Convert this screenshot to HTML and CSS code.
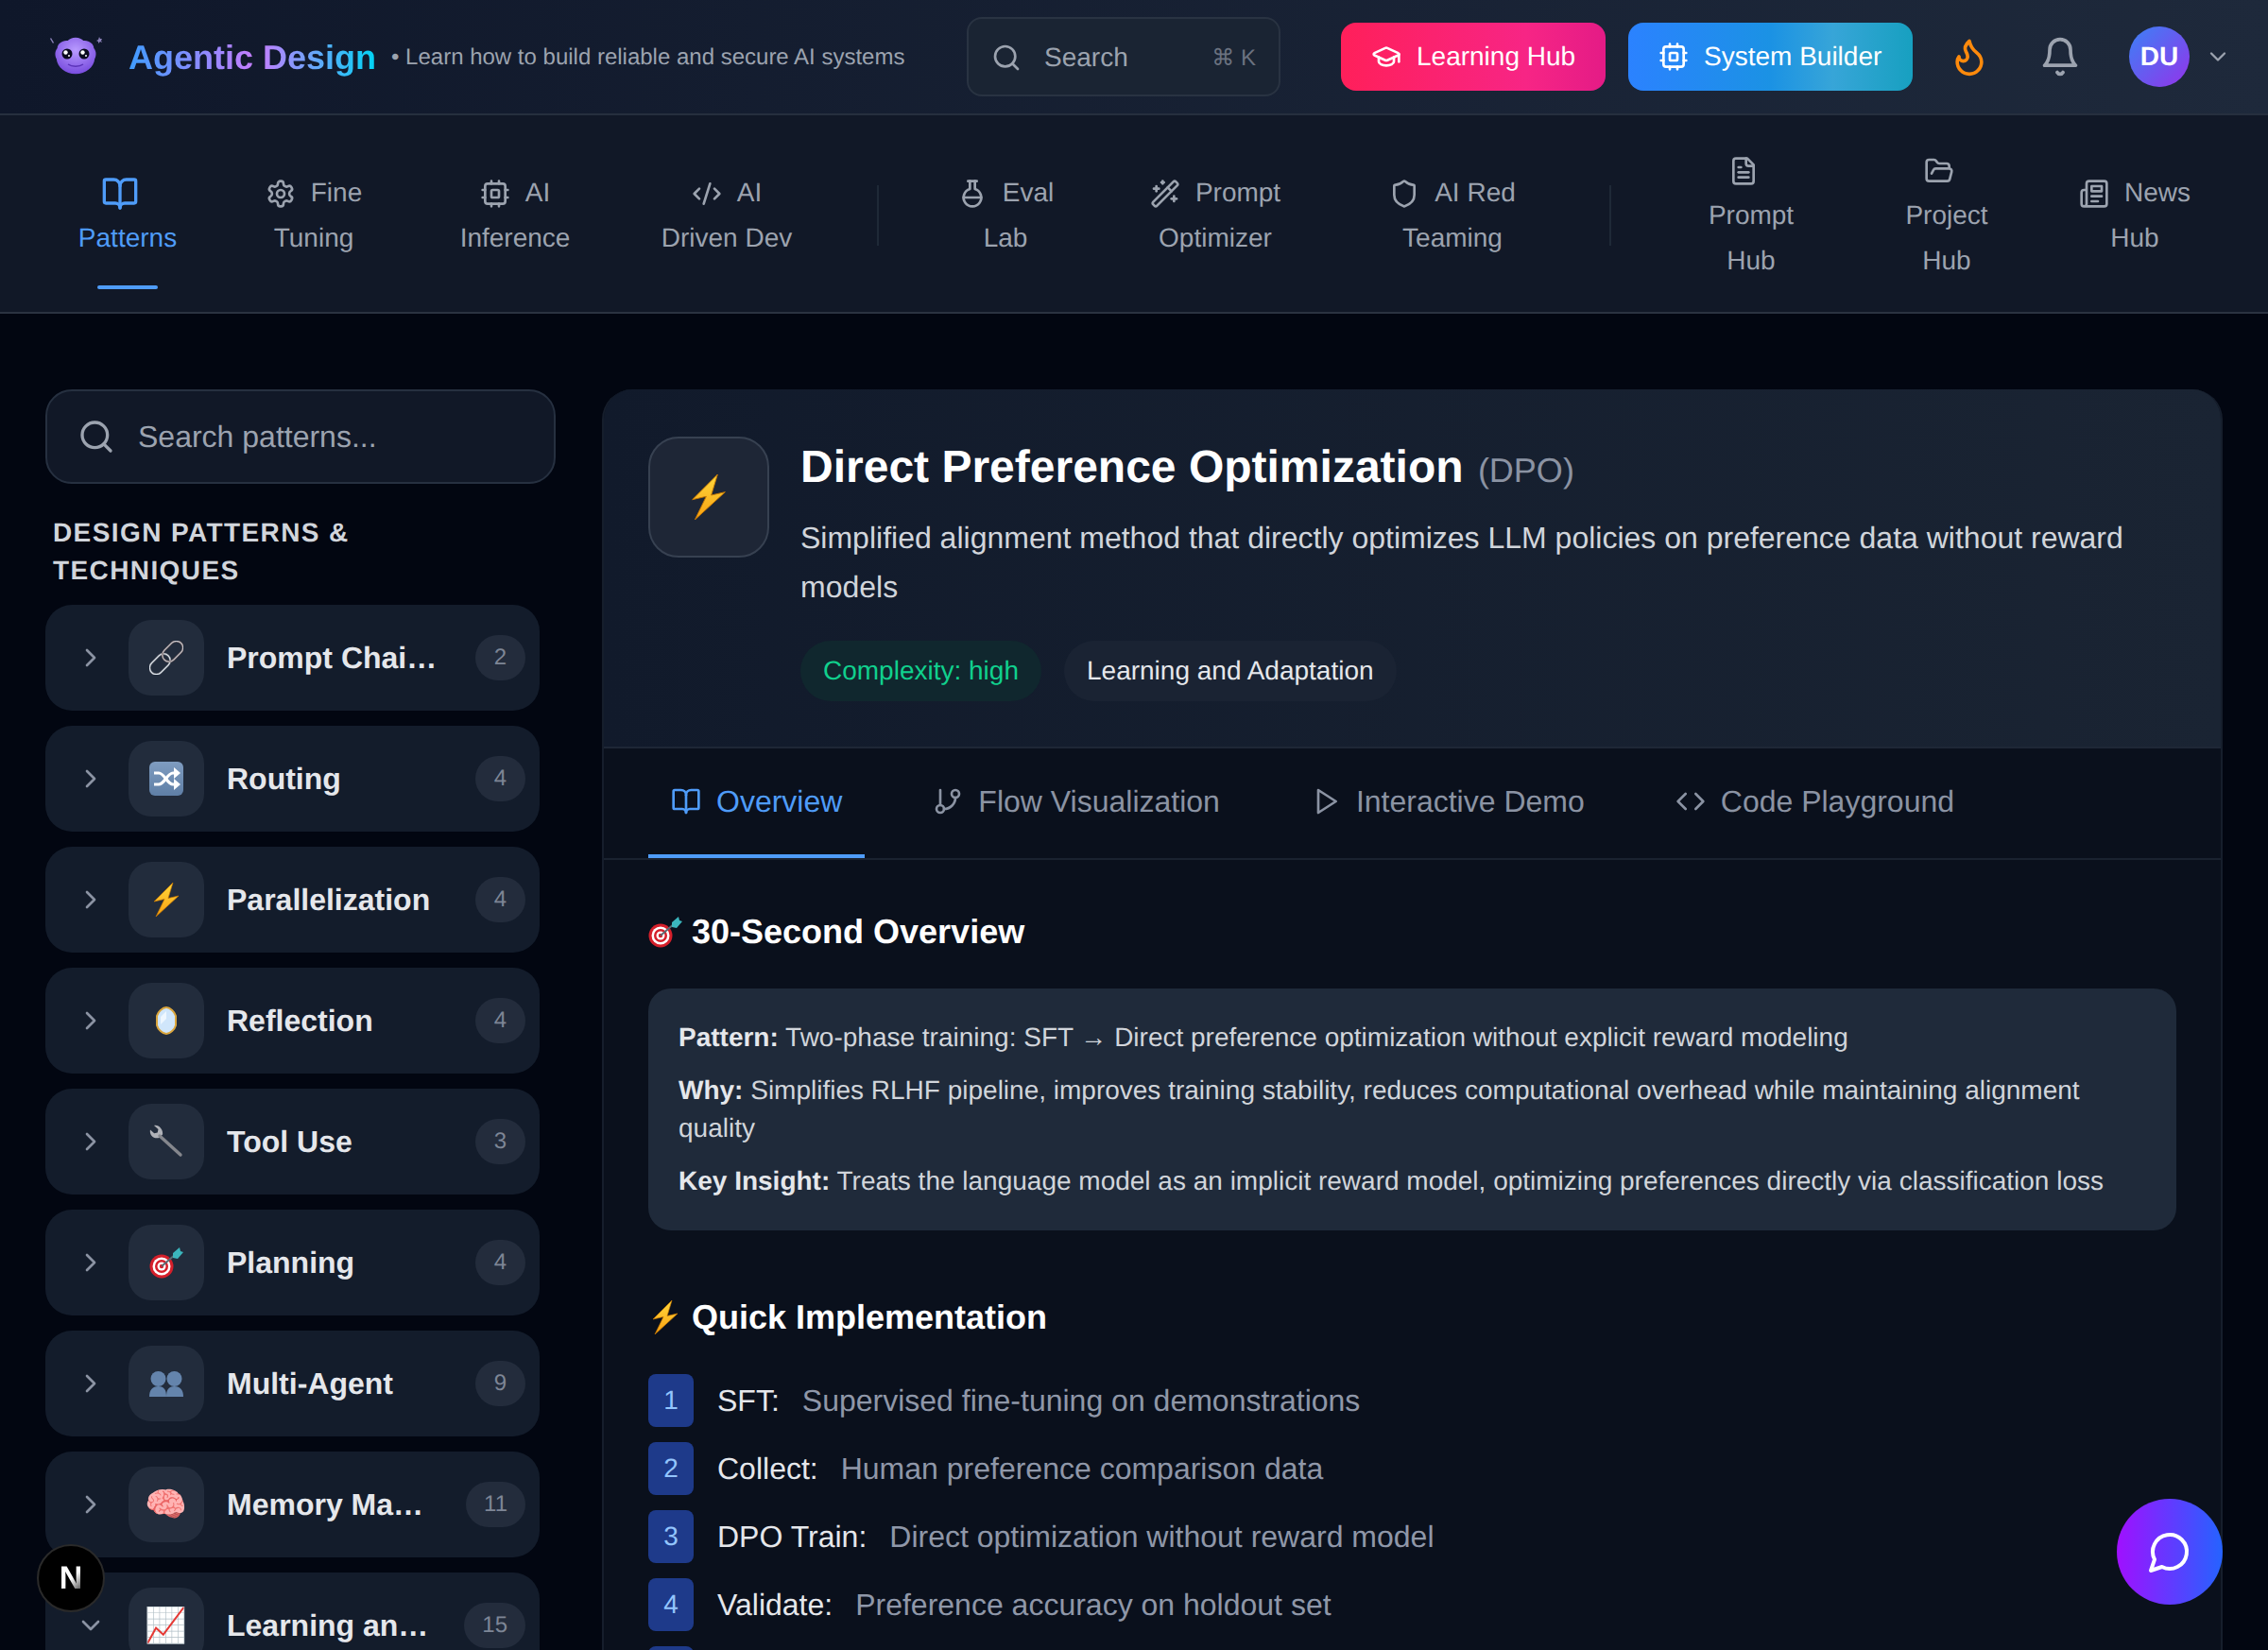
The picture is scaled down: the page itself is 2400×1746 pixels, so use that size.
FILE: index.html
```html
<!DOCTYPE html>
<html lang="en">
<head>
<meta charset="utf-8">
<title>Direct Preference Optimization - Agentic Design</title>
<link rel="stylesheet" href="styles.css">
</head>
<body>

<svg class="sprite" xmlns="http://www.w3.org/2000/svg">
 <defs>
  <linearGradient id="boltfill" x1="0" y1="0" x2="0" y2="1"><stop offset="0" stop-color="#ffd83d"/><stop offset="1" stop-color="#f9a010"/></linearGradient>
  <linearGradient id="tilefill" x1="0" y1="0" x2="0" y2="1"><stop offset="0" stop-color="#7f9cc0"/><stop offset="1" stop-color="#5f7fa6"/></linearGradient>
  <radialGradient id="blobfill" cx=".5" cy=".35" r=".7"><stop offset="0" stop-color="#b99bff"/><stop offset="1" stop-color="#7447dc"/></radialGradient>
 </defs>
 <symbol id="i-book" viewBox="0 0 24 24"><path d="M12 7v14"/><path d="M3 18a1 1 0 0 1-1-1V4a1 1 0 0 1 1-1h5a4 4 0 0 1 4 4 4 4 0 0 1 4-4h5a1 1 0 0 1 1 1v13a1 1 0 0 1-1 1h-6a3 3 0 0 0-3 3 3 3 0 0 0-3-3z"/></symbol>
 <symbol id="i-gear" viewBox="0 0 24 24"><path d="M12.22 2h-.44a2 2 0 0 0-2 2v.18a2 2 0 0 1-1 1.73l-.43.25a2 2 0 0 1-2 0l-.15-.08a2 2 0 0 0-2.73.73l-.22.38a2 2 0 0 0 .73 2.73l.15.1a2 2 0 0 1 1 1.72v.51a2 2 0 0 1-1 1.74l-.15.09a2 2 0 0 0-.73 2.73l.22.38a2 2 0 0 0 2.73.73l.15-.08a2 2 0 0 1 2 0l.43.25a2 2 0 0 1 1 1.73V20a2 2 0 0 0 2 2h.44a2 2 0 0 0 2-2v-.18a2 2 0 0 1 1-1.73l.43-.25a2 2 0 0 1 2 0l.15.08a2 2 0 0 0 2.73-.73l.22-.39a2 2 0 0 0-.73-2.73l-.15-.08a2 2 0 0 1-1-1.74v-.5a2 2 0 0 1 1-1.74l.15-.09a2 2 0 0 0 .73-2.73l-.22-.38a2 2 0 0 0-2.73-.73l-.15.08a2 2 0 0 1-2 0l-.43-.25a2 2 0 0 1-1-1.73V4a2 2 0 0 0-2-2z"/><circle cx="12" cy="12" r="3"/></symbol>
 <symbol id="i-cpu" viewBox="0 0 24 24"><rect x="4" y="4" width="16" height="16" rx="2"/><rect x="9" y="9" width="6" height="6" rx="1"/><path d="M15 2v2M15 20v2M2 15h2M2 9h2M20 15h2M20 9h2M9 2v2M9 20v2"/></symbol>
 <symbol id="i-codexml" viewBox="0 0 24 24"><path d="m18 16 4-4-4-4"/><path d="m6 8-4 4 4 4"/><path d="m14.5 4-5 16"/></symbol>
 <symbol id="i-flask" viewBox="0 0 24 24"><path d="M10 2v6.292a7 7 0 1 0 4 0V2"/><path d="M5 15h14"/><path d="M8.5 2h7"/></symbol>
 <symbol id="i-wand" viewBox="0 0 24 24"><path d="m21.64 3.64-1.28-1.28a1.21 1.21 0 0 0-1.72 0L2.36 18.64a1.21 1.21 0 0 0 0 1.72l1.28 1.28a1.2 1.2 0 0 0 1.72 0L21.64 5.36a1.2 1.2 0 0 0 0-1.72"/><path d="m14 7 3 3"/><path d="M5 6v4"/><path d="M19 14v4"/><path d="M10 2v2"/><path d="M7 8H3"/><path d="M21 16h-4"/><path d="M11 3H9"/></symbol>
 <symbol id="i-shield" viewBox="0 0 24 24"><path d="M20 13c0 5-3.5 7.5-7.66 8.95a1 1 0 0 1-.67-.01C7.5 20.5 4 18 4 13V6a1 1 0 0 1 1-1c2 0 4.5-1.2 6.24-2.72a1.17 1.17 0 0 1 1.52 0C14.51 3.81 17 5 19 5a1 1 0 0 1 1 1z"/></symbol>
 <symbol id="i-file" viewBox="0 0 24 24"><path d="M15 2H6a2 2 0 0 0-2 2v16a2 2 0 0 0 2 2h12a2 2 0 0 0 2-2V7Z"/><path d="M14 2v4a2 2 0 0 0 2 2h4"/><path d="M10 9H8"/><path d="M16 13H8"/><path d="M16 17H8"/></symbol>
 <symbol id="i-folder" viewBox="0 0 24 24"><path d="m6 14 1.5-2.9A2 2 0 0 1 9.24 10H20a2 2 0 0 1 1.94 2.5l-1.54 6a2 2 0 0 1-1.95 1.5H4a2 2 0 0 1-2-2V5a2 2 0 0 1 2-2h3.9a2 2 0 0 1 1.69.9l.81 1.2a2 2 0 0 0 1.67.9H18a2 2 0 0 1 2 2v2"/></symbol>
 <symbol id="i-news" viewBox="0 0 24 24"><path d="M4 22h16a2 2 0 0 0 2-2V4a2 2 0 0 0-2-2H8a2 2 0 0 0-2 2v16a2 2 0 0 1-2 2Zm0 0a2 2 0 0 1-2-2v-9c0-1.1.9-2 2-2h2"/><path d="M18 14h-8"/><path d="M15 18h-5"/><path d="M10 6h8v4h-8V6Z"/></symbol>
 <symbol id="i-search" viewBox="0 0 24 24"><circle cx="11" cy="11" r="8"/><path d="m21 21-4.3-4.3"/></symbol>
 <symbol id="i-cap" viewBox="0 0 24 24"><path d="M21.42 10.922a1 1 0 0 0-.019-1.838L12.83 5.18a2 2 0 0 0-1.66 0L2.6 9.08a1 1 0 0 0 0 1.832l8.57 3.908a2 2 0 0 0 1.66 0z"/><path d="M22 10v6"/><path d="M6 12.5V16a6 3 0 0 0 12 0v-3.5"/></symbol>
 <symbol id="i-flame" viewBox="0 0 24 24"><path d="M8.5 14.5A2.5 2.5 0 0 0 11 12c0-1.38-.5-2-1-3-1.072-2.143-.224-4.054 2-6 .5 2.5 2 4.9 4 6.5 2 1.6 3 3.5 3 5.5a7 7 0 1 1-14 0c0-1.153.433-2.294 1-3a2.5 2.5 0 0 0 2.5 2.5z"/></symbol>
 <symbol id="i-bell" viewBox="0 0 24 24"><path d="M6 8a6 6 0 0 1 12 0c0 7 3 9 3 9H3s3-2 3-9"/><path d="M10.3 21a1.94 1.94 0 0 0 3.4 0"/></symbol>
 <symbol id="i-down" viewBox="0 0 24 24"><path d="m6 9 6 6 6-6"/></symbol>
 <symbol id="i-right" viewBox="0 0 24 24"><path d="m9 18 6-6-6-6"/></symbol>
 <symbol id="i-branch" viewBox="0 0 24 24"><path d="M6 3v12"/><circle cx="18" cy="6" r="3"/><circle cx="6" cy="18" r="3"/><path d="M18 9a9 9 0 0 1-9 9"/></symbol>
 <symbol id="i-play" viewBox="0 0 24 24"><path d="M6 3l14 9-14 9z"/></symbol>
 <symbol id="i-code" viewBox="0 0 24 24"><path d="m16 18 6-6-6-6"/><path d="m8 6-6 6 6 6"/></symbol>
 <symbol id="i-chat" viewBox="0 0 24 24"><path d="M7.9 20A9 9 0 1 0 4 16.1L2 22Z"/></symbol>

 <symbol id="e-bolt" viewBox="0 0 36 36"><path d="M25 0 5 20l11-2.500L7 36l24-22-11 2.500z" fill="url(#boltfill)" stroke="#c77700" stroke-width=".7"/></symbol>
 <symbol id="e-link" viewBox="0 0 36 36"><g fill="none" transform="rotate(-45 18 18)"><rect x="-4" y="11" width="25" height="14" rx="7" stroke="#6f7279" stroke-width="2.200"/><rect x="-4" y="11" width="25" height="14" rx="7" stroke="#e6edf5" stroke-width="1"/><rect x="15" y="11" width="25" height="14" rx="7" stroke="#6b5a5a" stroke-width="2.200"/><rect x="15" y="11" width="25" height="14" rx="7" stroke="#c9cbd2" stroke-width="1"/></g></symbol>
 <symbol id="e-shuffle" viewBox="0 0 36 36"><rect x="0" y="0" width="36" height="36" rx="6" fill="url(#tilefill)"/><g fill="none" stroke="#fff" stroke-width="3.200"><path d="M5 12h5c6 0 9 12 15 12h3"/><path d="M5 24h5c6 0 9-12 15-12h3"/></g><path d="M26 6l7 6-7 6zM26 18l7 6-7 6z" fill="#fff"/></symbol>
 <symbol id="e-mirror" viewBox="0 0 36 36"><path d="M18 4c4 0 9 5 10 9v10c-1 4-6 9-10 9s-9-5-10-9V13c1-4 6-9 10-9z" fill="#d0e6fb" stroke="#dba63d" stroke-width="2"/><path d="M12 14l6-6v8l-6 6z" fill="#eef7ff"/></symbol>
 <symbol id="e-wrench" viewBox="0 0 36 36"><path d="M5 1l4.500 4-.8 3.500-3.500.8L1 5.500C0 10 3 15.500 10.500 14L14 10.500C15 5.500 10-.5 5 1z" fill="#b0b2b8"/><path d="M11 12l22 20" stroke="#85878d" stroke-width="3.400" stroke-linecap="round"/></symbol>
 <symbol id="e-target" viewBox="0 0 36 36"><circle cx="13" cy="22" r="12.500" fill="#d51f2a"/><circle cx="13" cy="22" r="9.500" fill="#fff"/><circle cx="13" cy="22" r="7" fill="#d51f2a"/><circle cx="13" cy="22" r="4.500" fill="#fff"/><circle cx="13" cy="22" r="2.200" fill="#d51f2a"/><path d="M13 22 28 9" stroke="#5b6b73" stroke-width="2"/><path d="M25 8l7-6 1 4 3 1-6 7-5-1z" fill="#3bb6bd"/></symbol>
 <symbol id="e-people" viewBox="0 0 36 36"><g fill="#6484ac"><circle cx="9.500" cy="13" r="8"/><path d="M0 32c0-7 3-11 9.500-11S18 25 18 32z"/><circle cx="26.500" cy="13" r="8"/><path d="M18 32c0-7 2-11 8.500-11S36 25 36 32z"/></g></symbol>
</svg>

<header class="topbar">
 <div class="brand">
  <svg class="logo" viewBox="0 0 64 64">
   <path transform="translate(32 31) scale(.92 .8) translate(-32 -30)" d="M32 6c4 0 7 2 9 4 6-1 12 4 12 10 3 4 3 10 1 14-1 11-10 20-22 20S11 45 10 34c-2-4-2-10 1-14 0-6 6-11 12-10 2-2 5-4 9-4z" fill="url(#blobfill)"/>
   <circle cx="23" cy="29" r="5.500" fill="#0a0a1e"/><circle cx="41" cy="29" r="5.500" fill="#0a0a1e"/>
   <circle cx="21.500" cy="27.500" r="2.200" fill="#fff"/><circle cx="39.500" cy="27.500" r="2.200" fill="#fff"/>
   <circle cx="25" cy="31" r="1" fill="#fff"/><circle cx="43" cy="31" r="1" fill="#fff"/>
   <path d="M24 40c4 3 12 3 16 0" fill="none" stroke="#5a32b8" stroke-width="1.500"/>
   <path d="M6 12l3 5-1 1-3-5zM57 11l1 2 2 0-1 2 1 2-2-1-2 2 0-2-2-1 2-1z" fill="#8a80b8"/>
  </svg>
  <span class="brand-name">Agentic Design</span>
  <span class="brand-tag">&bull; Learn how to build reliable and secure AI systems</span>
 </div>
 <div class="top-actions">
  <div class="quick-search">
   <svg class="ico ico-32"><use href="#i-search"/></svg>
   <span class="quick-label">Search</span>
   <span class="quick-key">&#8984; K</span>
  </div>
  <a class="btn btn-pink"><svg class="ico ico-32"><use href="#i-cap"/></svg>Learning Hub</a>
  <a class="btn btn-blue"><svg class="ico ico-32"><use href="#i-cpu"/></svg>System Builder</a>
  <span class="icon-btn flame"><svg class="ico ico-44"><use href="#i-flame"/></svg></span>
  <span class="icon-btn"><svg class="ico ico-44"><use href="#i-bell"/></svg></span>
  <span class="avatar">DU</span>
  <svg class="ico ico-28 caret"><use href="#i-down"/></svg>
 </div>
</header>

<nav class="mainnav">
 <a class="nav-item active"><svg class="ico ico-40"><use href="#i-book"/></svg><br>Patterns</a>
 <a class="nav-item"><svg class="ico ico-32"><use href="#i-gear"/></svg>Fine<br>Tuning</a>
 <a class="nav-item"><svg class="ico ico-32"><use href="#i-cpu"/></svg>AI<br>Inference</a>
 <a class="nav-item"><svg class="ico ico-32"><use href="#i-codexml"/></svg>AI<br>Driven Dev</a>
 <span class="nav-sep"></span>
 <a class="nav-item"><svg class="ico ico-32"><use href="#i-flask"/></svg>Eval<br>Lab</a>
 <a class="nav-item"><svg class="ico ico-32"><use href="#i-wand"/></svg>Prompt<br>Optimizer</a>
 <a class="nav-item"><svg class="ico ico-32"><use href="#i-shield"/></svg>AI Red<br>Teaming</a>
 <span class="nav-sep"></span>
 <a class="nav-item"><svg class="ico ico-32"><use href="#i-file"/></svg><br>Prompt<br>Hub</a>
 <a class="nav-item"><svg class="ico ico-32"><use href="#i-folder"/></svg><br>Project<br>Hub</a>
 <a class="nav-item"><svg class="ico ico-32"><use href="#i-news"/></svg>News<br>Hub</a>
</nav>

<main class="page">
 <aside class="sidebar">
  <div class="side-search">
   <svg class="ico ico-40"><use href="#i-search"/></svg>
   <span>Search patterns...</span>
  </div>
  <h2 class="side-title">Design Patterns &amp; Techniques</h2>
  <ul class="cat-list">
   <li class="cat"><svg class="ico ico-32 cat-arrow"><use href="#i-right"/></svg><span class="cat-icon"><svg class="emoji"><use href="#e-link"/></svg></span><span class="cat-name">Prompt Chaining</span><span class="cat-count">2</span></li>
   <li class="cat"><svg class="ico ico-32 cat-arrow"><use href="#i-right"/></svg><span class="cat-icon"><svg class="emoji"><use href="#e-shuffle"/></svg></span><span class="cat-name">Routing</span><span class="cat-count">4</span></li>
   <li class="cat"><svg class="ico ico-32 cat-arrow"><use href="#i-right"/></svg><span class="cat-icon"><svg class="emoji"><use href="#e-bolt"/></svg></span><span class="cat-name">Parallelization</span><span class="cat-count">4</span></li>
   <li class="cat"><svg class="ico ico-32 cat-arrow"><use href="#i-right"/></svg><span class="cat-icon"><svg class="emoji"><use href="#e-mirror"/></svg></span><span class="cat-name">Reflection</span><span class="cat-count">4</span></li>
   <li class="cat"><svg class="ico ico-32 cat-arrow"><use href="#i-right"/></svg><span class="cat-icon"><svg class="emoji"><use href="#e-wrench"/></svg></span><span class="cat-name">Tool Use</span><span class="cat-count">3</span></li>
   <li class="cat"><svg class="ico ico-32 cat-arrow"><use href="#i-right"/></svg><span class="cat-icon"><svg class="emoji"><use href="#e-target"/></svg></span><span class="cat-name">Planning</span><span class="cat-count">4</span></li>
   <li class="cat"><svg class="ico ico-32 cat-arrow"><use href="#i-right"/></svg><span class="cat-icon"><svg class="emoji"><use href="#e-people"/></svg></span><span class="cat-name">Multi-Agent</span><span class="cat-count">9</span></li>
   <li class="cat"><svg class="ico ico-32 cat-arrow"><use href="#i-right"/></svg><span class="cat-icon">&#129504;</span><span class="cat-name">Memory Management</span><span class="cat-count">11</span></li>
   <li class="cat"><svg class="ico ico-32 cat-arrow"><use href="#i-down"/></svg><span class="cat-icon">&#128200;</span><span class="cat-name">Learning and Adaptation</span><span class="cat-count">15</span></li>
  </ul>
 </aside>

 <section class="detail">
  <div class="hero">
   <div class="hero-icon"><svg class="emoji-big"><use href="#e-bolt"/></svg></div>
   <div class="hero-text">
    <h1 class="hero-title">Direct Preference Optimization <span class="hero-abbr">(DPO)</span></h1>
    <p class="hero-desc">Simplified alignment method that directly optimizes LLM policies on preference data without reward models</p>
    <div class="tags">
     <span class="tag tag-green">Complexity: high</span>
     <span class="tag">Learning and Adaptation</span>
    </div>
   </div>
  </div>

  <div class="tabs">
   <a class="tab active"><svg class="ico ico-32"><use href="#i-book"/></svg>Overview</a>
   <a class="tab"><svg class="ico ico-32"><use href="#i-branch"/></svg>Flow Visualization</a>
   <a class="tab"><svg class="ico ico-32"><use href="#i-play"/></svg>Interactive Demo</a>
   <a class="tab"><svg class="ico ico-32"><use href="#i-code"/></svg>Code Playground</a>
  </div>

  <div class="tab-body">
   <h3 class="sec-title"><svg class="emoji"><use href="#e-target"/></svg>30-Second Overview</h3>
   <div class="summary">
    <p><b>Pattern:</b> Two-phase training: SFT &rarr; Direct preference optimization without explicit reward modeling</p>
    <p><b>Why:</b> Simplifies RLHF pipeline, improves training stability, reduces computational overhead while maintaining alignment quality</p>
    <p><b>Key Insight:</b> Treats the language model as an implicit reward model, optimizing preferences directly via classification loss</p>
   </div>
   <h3 class="sec-title sec-second"><svg class="emoji"><use href="#e-bolt"/></svg>Quick Implementation</h3>
   <ol class="steps">
    <li><span class="step-no">1</span><span class="step-label">SFT:</span><span class="step-text">Supervised fine-tuning on demonstrations</span></li>
    <li><span class="step-no">2</span><span class="step-label">Collect:</span><span class="step-text">Human preference comparison data</span></li>
    <li><span class="step-no">3</span><span class="step-label">DPO Train:</span><span class="step-text">Direct optimization without reward model</span></li>
    <li><span class="step-no">4</span><span class="step-label">Validate:</span><span class="step-text">Preference accuracy on holdout set</span></li>
    <li><span class="step-no">5</span><span class="step-label">Deploy:</span><span class="step-text">Release the aligned model</span></li>
   </ol>
  </div>
 </section>
</main>

<a class="dev-badge"><span>N</span></a>
<a class="chat-fab"><svg class="ico ico-48"><use href="#i-chat"/></svg></a>

</body>
</html>
```
FILE: styles.css
```css
* {
 box-sizing: border-box;
}
html, body {
 height: 100%;
}
body {
 margin: 0;
 height: 1746px;
 overflow: hidden;
 background: #020611;
 color: #e5e7eb;
 font-family: "Liberation Sans", Arial, sans-serif;
 text-rendering: geometricPrecision;
}
h1, h2, h3, p, ul, ol {
 margin: 0;
 padding: 0;
}
ul, ol {
 list-style: none;
}
.sprite {
 position: absolute;
 width: 0;
 height: 0;
}

/* icons */
.ico {
 display: inline-block;
 flex: none;
 fill: none;
 stroke: currentColor;
 stroke-width: 2;
 stroke-linecap: round;
 stroke-linejoin: round;
 vertical-align: middle;
}
.ico-28 { width: 28px; height: 28px; }
.ico-32 { width: 32px; height: 32px; }
.ico-40 { width: 40px; height: 40px; }
.ico-44 { width: 44px; height: 44px; }
.ico-48 { width: 48px; height: 48px; }
.emoji { width: 36px; height: 36px; display: block; }
.emoji-big { width: 48px; height: 48px; display: block; }

/* top bar */
.topbar {
 display: flex;
 align-items: center;
 justify-content: space-between;
 height: 122px;
 padding: 0 39px 0 48px;
 background: linear-gradient(90deg, #0f172a, #1e293b);
 border-bottom: 2px solid #262f3e;
}
.brand {
 display: flex;
 align-items: center;
}
.logo {
 width: 64px;
 height: 64px;
 margin-right: 24px;
}
.brand-name {
 padding-top: 2px;
 font-size: 36px;
 font-weight: 700;
 background: linear-gradient(90deg, #3f9cff, #c77dff 52%, #00d4f5);
 -webkit-background-clip: text;
 background-clip: text;
 color: transparent;
}
.brand-tag {
 margin-left: 16px;
 padding-top: 2px;
 font-size: 24px;
 color: #9ca3af;
}
.top-actions {
 display: flex;
 align-items: center;
}
.quick-search {
 display: flex;
 align-items: center;
 width: 332px;
 height: 84px;
 padding: 2px 24px 0 24px;
 margin-right: 64px;
 background: #1a2433;
 border: 2px solid #293342;
 border-radius: 16px;
 color: #9ca3af;
}
.quick-label {
 margin-left: 24px;
 font-size: 28px;
}
.quick-key {
 margin-left: auto;
 font-size: 24px;
 color: #6b7280;
}
.btn {
 display: flex;
 align-items: center;
 gap: 16px;
 height: 72px;
 padding: 0 32px;
 border-radius: 16px;
 color: #fff;
 font-size: 28px;
 white-space: nowrap;
}
.btn-pink {
 width: 280px;
 margin-right: 24px;
 background: linear-gradient(90deg, #ff1f5a, #f72585 70%, #e41b86);
}
.btn-blue {
 width: 301px;
 margin-right: 28px;
 background: linear-gradient(90deg, #2b82ff, #1b92e4 50%, #37a5d8 72%, #17a0c0);
}
.icon-btn {
 display: flex;
 align-items: center;
 justify-content: center;
 width: 64px;
 height: 64px;
 margin-right: 32px;
 color: #9ca3af;
}
.flame {
 color: #ff8a0c;
}
.avatar {
 display: flex;
 align-items: center;
 justify-content: center;
 width: 64px;
 height: 64px;
 margin-left: 9px;
 border-radius: 50%;
 background: linear-gradient(135deg, #3b82f6, #9333ea);
 color: #fff;
 font-size: 28px;
 font-weight: 700;
}
.caret {
 margin-left: 16px;
 color: #9ca3af;
}

/* main navigation */
.mainnav {
 display: grid;
 grid-template-columns: 198px 196px 230px 218px 102px 168px 276px 226px 108px 190px 224px 174px;
 align-items: center;
 height: 210px;
 padding: 4px 0 0 36px;
 background: #111827;
 border-bottom: 2px solid #2b3341;
}
.nav-item {
 position: relative;
 text-align: center;
 font-size: 28px;
 line-height: 48px;
 color: #9ca3af;
}
.nav-item .ico {
 margin-right: 16px;
 position: relative;
 top: -1px;
}
.nav-item.active {
 color: #4f9cf9;
}
.nav-item.active::after {
 content: "";
 position: absolute;
 left: 50%;
 bottom: -30px;
 width: 64px;
 height: 4px;
 margin-left: -32px;
 border-radius: 2px;
 background: #4f9cf9;
}
.nav-sep {
 justify-self: center;
 width: 2px;
 height: 64px;
 background: #1f2937;
}

/* page */
.page {
 display: flex;
 gap: 49px;
 padding: 80px 48px 0;
}
.sidebar {
 flex: none;
 width: 540px;
}
.side-search {
 display: flex;
 align-items: center;
 gap: 24px;
 height: 100px;
 padding: 0 32px;
 background: #111827;
 border: 2px solid #263040;
 border-radius: 28px;
 color: #9ca3af;
 font-size: 32px;
}
.side-title {
 margin: 32px 0 16px;
 padding: 0 60px 0 8px;
 font-size: 28px;
 line-height: 40px;
 font-weight: 700;
 letter-spacing: 1.4px;
 text-transform: uppercase;
 color: #d1d5db;
}
.cat-list {
 display: flex;
 flex-direction: column;
 gap: 16px;
 width: 523px;
}
.cat {
 display: flex;
 align-items: center;
 height: 112px;
 padding: 0 15px 0 32px;
 background: #131c2b;
 border-radius: 28px;
}
.cat-arrow {
 margin-right: 24px;
 color: #8b93a3;
}
.cat-icon {
 display: flex;
 align-items: center;
 justify-content: center;
 flex: none;
 width: 80px;
 height: 80px;
 margin-right: 24px;
 background: #222c3c;
 border-radius: 24px;
 font-size: 36px;
}
.cat-name {
 flex: 1;
 min-width: 0;
 overflow: hidden;
 white-space: nowrap;
 text-overflow: ellipsis;
 font-size: 32px;
 font-weight: 700;
 color: #e5e7eb;
}
.cat-count {
 flex: none;
 min-width: 53px;
 height: 48px;
 margin-left: 26px;
 padding: 0 19px;
 background: #232c3c;
 border-radius: 24px;
 text-align: center;
 font-size: 24px;
 line-height: 48px;
 color: #7e8696;
}

/* detail panel */
.detail {
 flex: 1;
 min-width: 0;
 height: 1400px;
 background: #0a101c;
 border: 2px solid #161e2c;
 border-top: 0;
 border-radius: 32px 32px 0 0;
 overflow: hidden;
}
.hero {
 display: flex;
 gap: 33px;
 height: 380px;
 padding: 48px 47px 0;
 background: linear-gradient(90deg, #111a2b, #1a2433);
 border-bottom: 2px solid #1e2736;
}
.hero-icon {
 display: flex;
 align-items: center;
 justify-content: center;
 flex: none;
 width: 128px;
 height: 128px;
 margin-top: 2px;
 background: #1e2636;
 border: 2px solid #374151;
 border-radius: 32px;
}
.hero-text {
 flex: 1;
 min-width: 0;
 padding-top: 3px;
}
.hero-title {
 font-size: 48px;
 line-height: 64px;
 font-weight: 700;
 color: #fff;
}
.hero-abbr {
 margin-left: 2px;
 font-size: 36px;
 font-weight: 400;
 color: #8b93a3;
}
.hero-desc {
 margin-top: 13px;
 font-size: 32px;
 line-height: 52px;
 color: #d1d5db;
}
.tags {
 display: flex;
 gap: 24px;
 margin-top: 31px;
}
.tag {
 height: 64px;
 padding: 0 24px;
 background: #1a2333;
 border-radius: 32px;
 font-size: 28px;
 line-height: 64px;
 color: #e5e7eb;
}
.tag-green {
 background: #10272e;
 color: #10d08d;
}
.tabs {
 display: flex;
 gap: 48px;
 height: 118px;
 padding: 0 47px;
 border-bottom: 2px solid #1a2230;
}
.tab {
 position: relative;
 display: flex;
 align-items: center;
 gap: 16px;
 height: 116px;
 padding: 0 24px 4px;
 font-size: 32px;
 color: #8b93a3;
}
.tab.active {
 color: #4f9cf9;
 border-bottom: 4px solid #4f9cf9;
 padding-bottom: 0;
}
.tab-body {
 padding: 52px 47px 0;
}
.sec-title {
 display: flex;
 align-items: center;
 gap: 10px;
 height: 48px;
 font-size: 36px;
 font-weight: 700;
 color: #fff;
}
.sec-second {
 margin-top: 68px;
}
.summary {
 margin-top: 36px;
 padding: 32px;
 background: #1f2a3a;
 border-radius: 24px;
 font-size: 28px;
 line-height: 40px;
 color: #d1d5db;
}
.summary p + p {
 margin-top: 16px;
}
.summary b {
 color: #e5e7eb;
}
.steps {
 display: flex;
 flex-direction: column;
 gap: 16px;
 margin-top: 36px;
}
.steps li {
 display: flex;
 align-items: center;
 font-size: 32px;
}
.step-no {
 flex: none;
 width: 48px;
 height: 56px;
 margin-right: 25px;
 background: #1e3a8a;
 border-radius: 8px;
 text-align: center;
 font-size: 28px;
 line-height: 56px;
 color: #93c5fd;
}
.step-label {
 margin-right: 24px;
 color: #e5e7eb;
}
.step-text {
 color: #8f97a8;
}

/* floating buttons */
.dev-badge {
 position: fixed;
 left: 39px;
 top: 1634px;
 display: flex;
 align-items: center;
 justify-content: center;
 width: 72px;
 height: 72px;
 background: #000;
 border: 2px solid #2a2a2a;
 border-radius: 50%;
}
.dev-badge span {
 font-size: 34px;
 font-weight: 700;
 background: linear-gradient(135deg, #fff 50%, #555 85%);
 -webkit-background-clip: text;
 background-clip: text;
 color: transparent;
}
.chat-fab {
 position: fixed;
 left: 2240px;
 top: 1586px;
 display: flex;
 align-items: center;
 justify-content: center;
 width: 112px;
 height: 112px;
 background: linear-gradient(90deg, #a010ff, #2563ff);
 border-radius: 50%;
 color: #fff;
}
```
